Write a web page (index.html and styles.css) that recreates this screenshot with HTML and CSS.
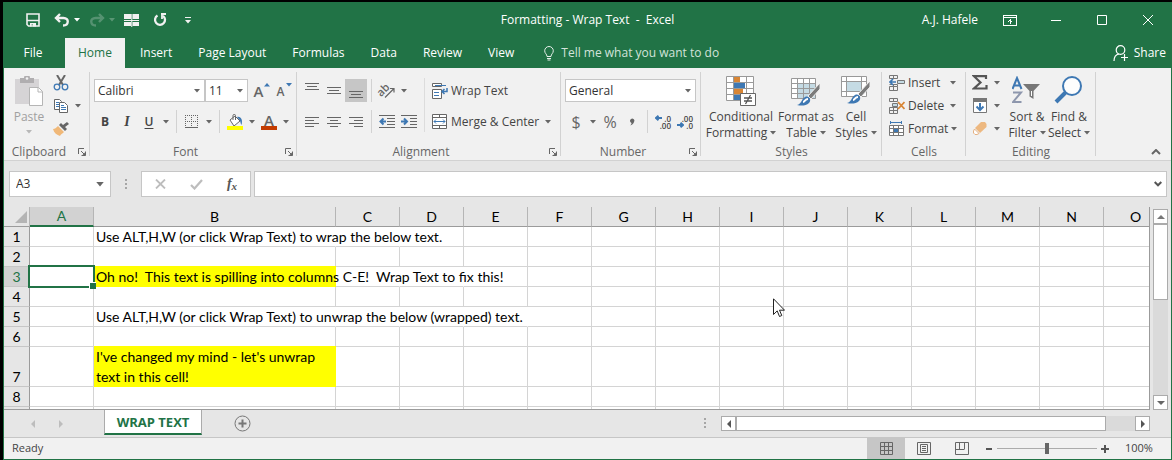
FILE: index.html
```html
<!DOCTYPE html>
<html lang="en">
<head>
<meta charset="utf-8">
<title>Formatting - Wrap Text - Excel</title>
<link rel="stylesheet" href="styles.css">
</head>
<body>
<svg class="defs" width="0" height="0" aria-hidden="true">
  <symbol id="down" viewBox="0 0 6 4"><path d="M0 0h6L3 3.6z" fill="currentColor"/></symbol>
  <symbol id="launch" viewBox="0 0 8 8"><path d="M.5 6V.5H6M3 3l4 4M7.5 3.5v4h-4" fill="none" stroke="currentColor"/><path d="M7.5 4v3.500H4z" fill="currentColor"/></symbol>
  <symbol id="dots" viewBox="0 0 2 11"><path d="M0 0h2v2H0zM0 4h2v2H0zM0 8h2v2H0z" fill="#a6a6a6"/></symbol>
</svg>
<div class="window">
  <header class="titlebar">
    <div class="quick">
      <button class="q" aria-label="Save"><svg width="14" height="14" viewBox="0 0 14 14"><path d="M1 1h12v12H2.500L1 11.500z" fill="none" stroke="#f1f1f1" stroke-width="1.600"/><path d="M1 7.500h12" stroke="#f1f1f1" stroke-width="1.500"/><path d="M4 10h6v3.500H7V11.500H5.500v2H4z" fill="#f1f1f1"/></svg></button>
      <button class="q" aria-label="Undo"><svg width="16" height="14" viewBox="0 0 16 14"><path d="M6 1L2 5l4 4M2 5h7.500c6 0 5.500 7.500-.5 7.500" fill="none" stroke="#f1f1f1" stroke-width="2.400"/></svg></button>
      <button class="qa" aria-label="Undo list"><svg width="6" height="4"><use href="#down"/></svg></button>
      <button class="q dim" aria-label="Redo"><svg width="16" height="14" viewBox="0 0 16 14"><path d="M10 1l4 4-4 4M14 5H6.500c-6 0-5.500 7.500.5 7.500" fill="none" stroke="#f1f1f1" stroke-width="2.400"/></svg></button>
      <button class="qa dim" aria-label="Redo list"><svg width="6" height="4"><use href="#down"/></svg></button>
      <button class="q" aria-label="Freeze panes"><svg width="16" height="13" viewBox="0 0 16 13"><path d="M0 0h7v5H0zM8.500 0H15v5H8.500zM0 8h7v4H0zM8.500 8H15v4H8.500z" fill="#f1f1f1"/><path d="M0 6h15v1H0zM7.250 0h1v13h-1z" fill="#f1f1f1"/></svg></button>
      <button class="q refresh" aria-label="Repeat"><svg width="14" height="14" viewBox="0 0 14 14"><path d="M4.500 2.500A5 5 0 1 0 10 2.800" fill="none" stroke="#f1f1f1" stroke-width="2.300"/><path d="M8 1h5M9 .5V6" stroke="#f1f1f1" stroke-width="1.800"/></svg></button>
      <button class="q" aria-label="Customize toolbar"><svg width="6" height="7" viewBox="0 0 6 7"><path d="M0 0h6v1H0zM0 3h6L3 6.500z" fill="#f1f1f1"/></svg></button>
    </div>
    <h1 class="title">Formatting - Wrap Text&nbsp; -&nbsp; Excel</h1>
    <div class="account">
      <span class="user">A.J. Hafele</span>
      <button class="w" aria-label="Ribbon display options"><svg width="14" height="11" viewBox="0 0 14 11" fill="none" stroke="#fff" shape-rendering="crispEdges"><path d="M.5.5h13v10H.5zM0 2.500h14M7 4v5M5 6.500h1M8 6.500h1M6 5.500h2"/></svg></button>
      <button class="w" aria-label="Minimize"><svg width="10" height="10"><path d="M0 5h10v1H0z" fill="#fff"/></svg></button>
      <button class="w" aria-label="Maximize"><svg width="10" height="10"><path d="M.5.5h9v9h-9z" fill="none" stroke="#fff"/></svg></button>
      <button class="w" aria-label="Close"><svg width="10" height="10"><path d="M0 0l10 10M10 0L0 10" fill="none" stroke="#fff"/></svg></button>
    </div>
  </header>

  <nav class="tabs">
    <button class="tab file">File</button>
    <button class="tab active">Home</button>
    <button class="tab">Insert</button>
    <button class="tab">Page Layout</button>
    <button class="tab">Formulas</button>
    <button class="tab">Data</button>
    <button class="tab">Review</button>
    <button class="tab">View</button>
    <button class="tell"><svg width="10" height="15" viewBox="0 0 10 15" fill="none" stroke="#e6efe9"><path d="M3 10.500C3 8 .7 7.500.7 4.800a4.300 4.300 0 0 1 8.600 0C9.300 7.500 7 8 7 10.500z"/><path d="M3 12.500h4M3.500 14h3"/></svg>Tell me what you want to do</button>
    <button class="share"><svg width="16" height="16" viewBox="0 0 16 16" fill="none" stroke="#fff" stroke-width="1.200"><circle cx="7.500" cy="5" r="4.300"/><path d="M1 16c0-4 2-6.500 5-7M8 12.500h7M11.500 9v7"/></svg>Share</button>
  </nav>

  <div class="ribbon">
    <section class="group g-clip">
      <div class="body">
        <button class="big paste"><svg width="28" height="30" viewBox="0 0 28 30"><path d="M0 3h24v25H0z" fill="#d6d4d6"/><path d="M5 2h4a3 3 0 0 1 6 0h4v5H5z" fill="#b0aeb0"/><circle cx="12" cy="2.500" r="1.300" fill="#f1f1f1"/><path d="M14.500 11.500h9l4 4v14h-13z" fill="#fff" stroke="#b5b5b5"/><path d="M23 11.500V16h4.500" fill="none" stroke="#b5b5b5"/></svg><span>Paste</span><svg class="ar" width="6" height="4"><use href="#down"/></svg></button>
        <div class="stack">
          <div class="row"><button class="b" aria-label="Cut"><svg width="16" height="16" viewBox="0 0 16 16" fill="none"><path d="M4 0l6 10M12 0L6 10" stroke="#666" stroke-width="2"/><circle cx="4" cy="12" r="2.800" stroke="#3e78b3" stroke-width="1.300"/><circle cx="12" cy="12" r="2.800" stroke="#3e78b3" stroke-width="1.300"/></svg></button></div>
          <div class="row"><button class="b" aria-label="Copy"><svg width="16" height="16" viewBox="0 0 16 16"><g fill="#fff" stroke="#666"><path d="M1.500 1.500h5l2 2v8h-7z"/><path d="M6.500 4.500h5l3 3v7h-8z"/></g><path d="M3 4.500h3M3 6.500h3M3 8.500h3M8 7.500h3M8 9.500h5M8 11.500h5" stroke="#3e78b3"/></svg></button><button class="a" aria-label="Copy options"><svg width="6" height="4"><use href="#down"/></svg></button></div>
          <div class="row"><button class="b" aria-label="Format painter"><svg width="16" height="14" viewBox="0 0 16 14"><path d="M5 4l6 6c-2 2-3 2-4 4C4 13 1 11 0 7c2 0 3-1 5-3z" fill="#f0b878"/><path d="M6 3l6 6 2-2-2-2 4-3-2-2-4 3-2-2z" fill="#666"/></svg></button></div>
        </div>
      </div>
      <footer><span>Clipboard</span><button class="launch" aria-label="Clipboard settings"><svg width="8" height="8"><use href="#launch"/></svg></button></footer>
    </section>

    <section class="group g-font">
      <div class="body rows">
        <div class="row">
          <label class="combo face"><select aria-label="Font"><option>Calibri</option></select><svg width="6" height="4"><use href="#down"/></svg></label>
          <label class="combo size"><select aria-label="Font size"><option>11</option></select><svg width="6" height="4"><use href="#down"/></svg></label>
          <button class="b" aria-label="Increase font size"><span class="ga">A</span><svg class="tip" width="6" height="4" viewBox="0 0 6 4"><path d="M0 3.500h6L3 0z" fill="#3e78b3"/></svg></button>
          <button class="b" aria-label="Decrease font size"><span class="ga small">A</span><svg class="tip" width="6" height="4" viewBox="0 0 6 4"><path d="M0 0h6L3 3.500z" fill="#3e78b3"/></svg></button>
        </div>
        <div class="row second">
          <button class="b bold">B</button><button class="b ital">I</button><button class="b under">U</button><button class="a" aria-label="Underline options"><svg width="6" height="4"><use href="#down"/></svg></button>
          <i class="sep"></i>
          <button class="b" aria-label="Borders"><svg width="14" height="14" viewBox="0 0 14 14" stroke="#666" fill="none"><path d="M0 .5h13M0 6.500h13M.5 0v12M6.500 0v12M12.500 0v12" stroke-dasharray="1 1"/><path d="M0 12.500h13"/></svg></button><button class="a" aria-label="Border options"><svg width="6" height="4"><use href="#down"/></svg></button>
          <i class="sep"></i>
          <button class="b" aria-label="Fill color"><svg width="17" height="16" viewBox="0 0 17 16"><path d="M3 6l5-4 5 5-6 5z" fill="#fff" stroke="#666"/><path d="M6 6V1.500C6 0 8.500 0 8.500 1.500V6" fill="none" stroke="#666"/><path d="M10 3c4-1 6 3 4.500 8-1-1-1-4-2-5z" fill="#3e78b3"/><path d="M0 12h16v4H0z" fill="#ff0"/></svg></button><button class="a" aria-label="Fill color options"><svg width="6" height="4"><use href="#down"/></svg></button>
          <button class="b fontcolor" aria-label="Font color"><span>A</span></button><button class="a" aria-label="Font color options"><svg width="6" height="4"><use href="#down"/></svg></button>
        </div>
      </div>
      <footer><span>Font</span><button class="launch" aria-label="Font settings"><svg width="8" height="8"><use href="#launch"/></svg></button></footer>
    </section>

    <section class="group g-align">
      <div class="body">
        <div class="rows">
          <div class="row">
            <button class="b" aria-label="Top align"><svg width="14" height="16" class="ln"><path d="M0 .5h14M2 3.500h10M0 6.500h14"/></svg></button>
            <button class="b" aria-label="Middle align"><svg width="14" height="16" class="ln"><path d="M0 4.500h14M2 7.500h10M0 10.500h14"/></svg></button>
            <button class="b on" aria-label="Bottom align"><svg width="14" height="16" class="ln"><path d="M0 8.500h14M2 11.500h10M0 14.500h14"/></svg></button>
            <i class="sep"></i>
            <button class="b" aria-label="Orientation"><svg width="22" height="22" viewBox="-2 -3 22 22"><text x="-1" y="11" transform="rotate(-45 5 8)" class="abtext">ab</text><path d="M7 14.500L16 5.500M12 5.500h4v4" fill="none" stroke="#666" stroke-width="1.200"/></svg></button><button class="a" aria-label="Orientation options"><svg width="6" height="4"><use href="#down"/></svg></button>
          </div>
          <div class="row second">
            <button class="b" aria-label="Align left"><svg width="14" height="14" class="ln"><path d="M0 2.500h14M0 5.500h9M0 8.500h14M0 11.500h9"/></svg></button>
            <button class="b" aria-label="Center"><svg width="14" height="14" class="ln"><path d="M0 2.500h14M3 5.500h8M0 8.500h14M3 11.500h8"/></svg></button>
            <button class="b" aria-label="Align right"><svg width="14" height="14" class="ln"><path d="M0 2.500h14M5 5.500h9M0 8.500h14M5 11.500h9"/></svg></button>
            <i class="sep"></i>
            <button class="b" aria-label="Decrease indent"><svg width="16" height="14" class="ln"><path d="M0 .5h16M8 3.500h8M8 6.500h8M8 9.500h8M0 12.500h16"/><path class="blue" d="M7 6.500H1M4.500 3.500l-3 3 3 3"/></svg></button>
            <button class="b" aria-label="Increase indent"><svg width="16" height="14" class="ln"><path d="M0 .5h16M9 3.500h7M9 6.500h7M9 9.500h7M0 12.500h16"/><path class="blue" d="M0 6.500h6M3 3.500l3 3-3 3"/></svg></button>
          </div>
        </div>
        <i class="tall"></i>
        <div class="rows labels">
          <div class="row"><button class="lab"><svg width="16" height="16" viewBox="0 0 16 16" fill="none" stroke="#666"><path d="M.5.5h9v3h-9z" fill="#fff"/><path d="M.5 6.500h9v9h-9z" fill="#fff"/><path d="M3 2.500h11M2 9.500h5M2 12.500h5" stroke="#3e78b3"/><path d="M15 5v3.500h-4M12.500 6l-2.500 2.500 2.500 2.500" stroke="#3e78b3" stroke-width="1.500"/></svg>Wrap Text</button></div>
          <div class="row second"><button class="lab"><svg width="16" height="16" viewBox="0 0 16 16" fill="none" stroke="#666"><path d="M.5.5h14v14H.5z" fill="#fff"/><path d="M0 3.500h15M0 11.500h15M7.500 0v3M7.500 12v3"/><path d="M2 7.500h11M4 5.500l-2 2 2 2M11 5.500l2 2-2 2" stroke="#3e78b3"/></svg>Merge &amp; Center</button><button class="a" aria-label="Merge options"><svg width="6" height="4"><use href="#down"/></svg></button></div>
        </div>
      </div>
      <footer><span>Alignment</span><button class="launch" aria-label="Alignment settings"><svg width="8" height="8"><use href="#launch"/></svg></button></footer>
    </section>

    <section class="group g-num">
      <div class="body rows">
        <div class="row"><label class="combo format"><select aria-label="Number format"><option>General</option></select><svg width="6" height="4"><use href="#down"/></svg></label></div>
        <div class="row second">
          <button class="b sym">$</button><button class="a" aria-label="Currency options"><svg width="6" height="4"><use href="#down"/></svg></button><button class="b sym">%</button><button class="b" aria-label="Comma style"><svg width="8" height="8" viewBox="0 0 8 8"><path d="M2 2.500a2.200 2.200 0 1 1 4 1.500C5.500 6 4 7 2 7.500c1-.8 1.500-1.500 1.500-2.500C2.500 4.500 2 3.500 2 2.500z" fill="#666"/></svg></button>
          <i class="sep"></i>
          <button class="b dec" aria-label="Increase decimal"><svg class="arrow" width="7" height="6" viewBox="0 0 7 6"><path d="M7 3H1.500M3.500.8L1 3l2.500 2.200"/></svg><span>.0</span><span class="full">.00</span></button>
          <button class="b dec" aria-label="Decrease decimal"><span class="full">.00</span><svg class="arrow" width="7" height="6" viewBox="0 0 7 6"><path d="M0 3h5.500M3.500.8L6 3 3.500 5.200"/></svg><span>.0</span></button>
        </div>
      </div>
      <footer><span>Number</span><button class="launch" aria-label="Number settings"><svg width="8" height="8"><use href="#launch"/></svg></button></footer>
    </section>

    <section class="group g-styles">
      <div class="body">
        <button class="big cf"><svg width="30" height="30" viewBox="0 0 30 30"><path d="M.5.5h27v24H.5z" fill="#fff"/><path d="M8 1h6v5H8zM8 13h9v5H8z" fill="#d88534"/><path d="M8 7h11v5H8zM8 19h6v5H8z" fill="#3e78b3"/><path d="M.5.5h27v24H.5zM7.500 0v24M20.500 0v24M0 6.500h28M0 12.500h28M0 18.500h28" fill="none" stroke="#999"/><path d="M14.500 17.500h15v12h-15z" fill="#fff" stroke="#666"/><path d="M18 22h8M18 25h8M24.500 19l-5 9" stroke="#555" fill="none" stroke-width="1.300"/></svg><span>Conditional</span><span>Formatting <svg width="6" height="4"><use href="#down"/></svg></span></button>
        <button class="big fat"><svg width="30" height="30" viewBox="0 0 30 30"><path d="M.5 2.500h24v20H.5z" fill="#fff"/><path d="M7 8h18v15H7z" fill="#c5dbe4"/><path d="M.5 2.500h24v20H.5zM6.500 2v20M12.500 2v20M18.500 2v20M0 7.500h25M0 12.500h25M0 17.500h25" fill="none" stroke="#999"/><path d="M29 7v6l-9 10-3-3z" fill="#7b7b7b" stroke="#f1f1f1"/><path d="M6 29c5-1 4-6 8-8s7 3 4 6-8 3-12 2z" fill="#3e78b3"/><path d="M12 26c2 0 2-3 5-3" stroke="#fff" stroke-width="2" fill="none"/></svg><span>Format as</span><span>Table <svg width="6" height="4"><use href="#down"/></svg></span></button>
        <button class="big cs"><svg width="30" height="30" viewBox="0 0 30 30"><path d="M.5.5h25v20H.5z" fill="#fff"/><path d="M6 6h15v9H6z" fill="#c5dbe4"/><path d="M.5.5h25v20H.5zM5.500 0v20M20.500 0v20M0 5.500h26M0 15.500h26" fill="none" stroke="#999"/><path d="M29 5v6l-9 10-3-3z" fill="#7b7b7b" stroke="#f1f1f1"/><path d="M6 27c5-1 4-6 8-8s7 3 4 6-8 3-12 2z" fill="#3e78b3"/><path d="M12 24c2 0 2-3 5-3" stroke="#fff" stroke-width="2" fill="none"/></svg><span>Cell</span><span>Styles <svg width="6" height="4"><use href="#down"/></svg></span></button>
      </div>
      <footer><span>Styles</span></footer>
    </section>

    <section class="group g-cells">
      <div class="body stack">
        <div class="row"><button class="lab"><svg width="16" height="16" viewBox="0 0 16 16" fill="none" stroke="#777"><path d="M.5.500h8v3h-8zM4.500 0v3M.5 11.500h8v4h-8zM4.500 9v6M.5 9.500h8v2"/><path d="M8.500 5.500h7v3h-7z" fill="#c5dbe4"/><path d="M7 7H1M4 4L1 7l3 3" stroke="#3e78b3" stroke-width="1.700"/></svg>Insert</button><button class="a" aria-label="Insert options"><svg width="6" height="4"><use href="#down"/></svg></button></div>
        <div class="row"><button class="lab"><svg width="16" height="16" viewBox="0 0 16 16" fill="none" stroke="#777"><path d="M.5.500h8v3h-8zM4.500 0v3M.5 9.500h8v6h-8zM4.500 9v6M.5 12.500h8"/><path d="M3.500 5.500h5v3h-5z" fill="#c5dbe4"/><path d="M9 4l6.500 7M15.500 4L9 11" stroke="#d88534" stroke-width="1.800"/></svg>Delete</button><button class="a" aria-label="Delete options"><svg width="6" height="4"><use href="#down"/></svg></button></div>
        <div class="row"><button class="lab"><svg width="16" height="16" viewBox="0 0 16 16" fill="none" stroke="#777"><path d="M.5 4.500h14v10H.5z" fill="#fff"/><path d="M4 7h5v4H4z" fill="#3e78b3" stroke="none"/><path d="M4.500 4v11M9.500 4v11M0 7.500h15M0 11.500h15"/><path d="M1 1.500h12M1.500 0v3M12.500 0v3" stroke="#3e78b3"/></svg>Format</button><button class="a" aria-label="Format options"><svg width="6" height="4"><use href="#down"/></svg></button></div>
      </div>
      <footer><span>Cells</span></footer>
    </section>

    <section class="group g-edit">
      <div class="body">
        <div class="stack">
          <div class="row"><button class="b" aria-label="AutoSum"><svg width="16" height="15" viewBox="0 0 16 15"><path d="M14 4V1.200H2L8.500 7.500 2 13.500h12.500V10" fill="none" stroke="#555" stroke-width="2.200"/></svg></button><button class="a" aria-label="AutoSum options"><svg width="6" height="4"><use href="#down"/></svg></button></div>
          <div class="row"><button class="b" aria-label="Fill"><svg width="14" height="16" viewBox="0 0 14 16"><path d="M.5.5h13v14H.5z" fill="#fff" stroke="#777"/><path d="M0 0h14v4H0z" fill="#777"/><path d="M7 5v7M3.500 8.500L7 12l3.500-3.500" fill="none" stroke="#3e78b3" stroke-width="2"/></svg></button><button class="a" aria-label="Fill options"><svg width="6" height="4"><use href="#down"/></svg></button></div>
          <div class="row"><button class="b" aria-label="Clear"><svg width="14" height="14" viewBox="0 0 14 14"><path d="M8 0h4l1.500 2v3L7 11 2 6z" fill="#edb880"/><path d="M1.500 7l4.500 4.500L4 12.500H2L.5 11V9z" fill="#fff" stroke="#e4b183"/></svg></button><button class="a" aria-label="Clear options"><svg width="6" height="4"><use href="#down"/></svg></button></div>
        </div>
        <button class="big sort"><svg width="30" height="30" viewBox="1 0 30 30"><path d="M1.500 13L6 2l4.500 11M3 9.500h6" fill="none" stroke="#3e78b3" stroke-width="2"/><path d="M2 16.500h8L2 26h8.500" fill="none" stroke="#8e97ad" stroke-width="2"/><path d="M12 8h17l-6.500 7v8l-4-2.500V15z" fill="#777"/><path d="M20.500 15v5" stroke="#fff"/></svg><span>Sort &amp;</span><span>Filter <svg width="6" height="4"><use href="#down"/></svg></span></button>
        <button class="big find"><svg width="30" height="30" viewBox="1 0 30 30"><circle cx="19" cy="10" r="9" fill="#fdfdfd" stroke="#3e78b3" stroke-width="2"/><path d="M12.500 16.500L3 26" stroke="#3e78b3" stroke-width="4"/></svg><span>Find &amp;</span><span>Select <svg width="6" height="4"><use href="#down"/></svg></span></button>
      </div>
      <footer><span>Editing</span></footer>
    </section>
    <button class="collapse" aria-label="Collapse ribbon"><svg width="10" height="6" viewBox="0 0 10 6"><path d="M1 5l4-4 4 4" fill="none" stroke="#666" stroke-width="2"/></svg></button>
  </div>

  <div class="formula">
    <label class="namebox"><input type="text" value="A3" aria-label="Name box"><svg width="8" height="5"><use href="#down"/></svg></label>
    <svg class="grip" width="2" height="11"><use href="#dots"/></svg>
    <div class="fx">
      <button aria-label="Cancel"><svg width="11" height="10" viewBox="0 0 11 10"><path d="M1 .5l9 9M10 .5l-9 9" stroke="#bdbdbd" stroke-width="1.800"/></svg></button>
      <button aria-label="Enter"><svg width="13" height="11" viewBox="0 0 13 11"><path d="M1 6l3.500 3.500L12 1" fill="none" stroke="#bdbdbd" stroke-width="2.200"/></svg></button>
      <button class="fn"><em>f</em><em class="x">x</em></button>
    </div>
    <label class="entry"><input type="text" aria-label="Formula bar"><svg width="8" height="6" viewBox="0 0 8 6"><path d="M.7 1L4 4.300 7.300 1" fill="none" stroke="#555" stroke-width="2"/></svg></label>
  </div>

  <main class="work">
    <div class="sheet">
      <table>
        <colgroup><col class="c-row"><col class="c"><col class="c-wide"><col class="c"><col class="c"><col class="c"><col class="c"><col class="c"><col class="c"><col class="c"><col class="c"><col class="c"><col class="c"><col class="c"><col class="c"><col class="c"></colgroup>
        <thead><tr><th class="corner"><svg width="12" height="12"><path d="M12 0v12H0z" fill="#b4b4b4"/></svg></th><th class="sel">A</th><th>B</th><th>C</th><th>D</th><th>E</th><th>F</th><th>G</th><th>H</th><th>I</th><th>J</th><th>K</th><th>L</th><th>M</th><th>N</th><th>O</th></tr></thead>
        <tbody>
          <tr><th>1</th><td></td><td class="open">Use ALT,H,W (or click Wrap Text) to wrap the below text.</td><td class="open"></td><td></td><td></td><td></td><td></td><td></td><td></td><td></td><td></td><td></td><td></td><td></td><td></td></tr>
          <tr><th>2</th><td></td><td></td><td></td><td></td><td></td><td></td><td></td><td></td><td></td><td></td><td></td><td></td><td></td><td></td><td></td></tr>
          <tr><th class="sel">3</th><td class="current"><div class="cursor"></div></td><td class="mark">Oh no!&nbsp; This text is spilling into columns C-E!&nbsp; Wrap Text to fix this!</td><td class="open"></td><td class="open"></td><td></td><td></td><td></td><td></td><td></td><td></td><td></td><td></td><td></td><td></td><td></td></tr>
          <tr><th>4</th><td></td><td></td><td></td><td></td><td></td><td></td><td></td><td></td><td></td><td></td><td></td><td></td><td></td><td></td><td></td></tr>
          <tr><th>5</th><td></td><td class="open">Use ALT,H,W (or click Wrap Text) to unwrap the below (wrapped) text.</td><td class="open"></td><td class="open"></td><td class="open"></td><td></td><td></td><td></td><td></td><td></td><td></td><td></td><td></td><td></td><td></td></tr>
          <tr><th>6</th><td></td><td></td><td></td><td></td><td></td><td></td><td></td><td></td><td></td><td></td><td></td><td></td><td></td><td></td><td></td></tr>
          <tr><th>7</th><td></td><td class="mark wrap">I've changed my mind - let's unwrap text in this cell!</td><td></td><td></td><td></td><td></td><td></td><td></td><td></td><td></td><td></td><td></td><td></td><td></td><td></td></tr>
          <tr><th>8</th><td></td><td></td><td></td><td></td><td></td><td></td><td></td><td></td><td></td><td></td><td></td><td></td><td></td><td></td><td></td></tr>
          <tr><th></th><td></td><td></td><td></td><td></td><td></td><td></td><td></td><td></td><td></td><td></td><td></td><td></td><td></td><td></td><td></td></tr>
        </tbody>
      </table>
    </div>
    <div class="vscroll">
      <button class="sb" aria-label="Scroll up"><svg width="8" height="4"><path d="M0 4h8L4 0z" fill="#777"/></svg></button>
      <div class="vthumb"></div>
      <button class="sb end" aria-label="Scroll down"><svg width="8" height="4"><path d="M0 0h8L4 4z" fill="#666"/></svg></button>
    </div>
  </main>

  <div class="sheetbar">
    <button class="nav" aria-label="Previous sheet"><svg width="4" height="8"><path d="M4 0v8L0 4z" fill="#bdbdbd"/></svg></button>
    <button class="nav" aria-label="Next sheet"><svg width="4" height="8"><path d="M0 0v8l4-4z" fill="#bdbdbd"/></svg></button>
    <button class="sheettab">WRAP TEXT</button>
    <button class="add" aria-label="New sheet"><svg width="17" height="17" viewBox="0 0 17 17" fill="none" stroke="#777"><circle cx="8.500" cy="8.500" r="7.500"/><path d="M8.500 4.500v8M4.500 8.500h8" stroke-width="2"/></svg></button>
    <svg class="grip" width="2" height="11"><use href="#dots"/></svg>
    <div class="hscroll">
      <button class="sb" aria-label="Scroll left"><svg width="4" height="8"><path d="M4 0v8L0 4z" fill="#555"/></svg></button>
      <div class="hthumb"></div>
      <button class="sb end" aria-label="Scroll right"><svg width="4" height="8"><path d="M0 0v8l4-4z" fill="#555"/></svg></button>
    </div>
  </div>

  <footer class="status">
    <span class="ready">Ready</span>
    <button class="view on" aria-label="Normal view"><svg width="13" height="13" fill="none" stroke="#666"><path d="M.5.5h12v12H.5zM4.500 0v13M8.500 0v13M0 4.500h13M0 8.500h13"/></svg></button>
    <button class="view" aria-label="Page layout view"><svg width="14" height="13" fill="none" stroke="#666"><path d="M.5.5h13v12H.5zM3.500 2.500h7v8h-7zM5 4.500h4M5 6.500h4M5 8.500h4"/></svg></button>
    <button class="view" aria-label="Page break view"><svg width="14" height="13" fill="none" stroke="#666"><path d="M.5.5h13v12H.5zM4.500 0v7M9.500 0v7M0 7.500h9.500"/></svg></button>
    <button class="zoom" aria-label="Zoom out"><svg width="6" height="2"><path d="M0 0h6v2H0z" fill="#555"/></svg></button>
    <input class="slider" type="range" min="0" max="100" value="50" aria-label="Zoom">
    <button class="zoom" aria-label="Zoom in"><svg width="8" height="8"><path d="M0 3h8v2H0zM3 0h2v8H3z" fill="#555"/></svg></button>
    <span class="percent">100%</span>
  </footer>

  <svg class="pointer" width="12" height="20" viewBox="0 0 12 20"><path d="M.5.8v15.700l3.700-3.600 2.300 5.600 2.300-1-2.300-5.300h5z" fill="#fff" stroke="#222"/></svg>
</div>
</body>
</html>
```
FILE: styles.css
```css
* { box-sizing: border-box; }
body {
  margin: 0;
  padding: 2px 0 0 3px;
  min-height: 100vh;
  background: #000;
  color: #444;
  font: 12px/16px "Open Sans", "Noto Sans", sans-serif;
}
button, input, select { font: inherit; color: inherit; }
button {
  display: flex;
  align-items: center;
  justify-content: center;
  padding: 0;
  border: 0;
  background: none;
  white-space: nowrap;
}
svg { flex: none; }
.defs { position: absolute; }

.window {
  position: relative;
  display: flex;
  flex-direction: column;
  height: calc(100vh - 2px);
  border: 1px solid #217346;
  border-top: 0;
  background: #e6e6e6;
}

/* title bar */
.titlebar {
  display: grid;
  grid-template-columns: 1fr auto 1fr;
  align-items: center;
  height: 36px;
  background: #217346;
  color: #fff;
}
.quick { display: flex; padding-left: 17px; }
.q { width: 24px; height: 24px; }
.qa { width: 12px; height: 24px; margin: 0 2px 0 -3px; }
.quick .q:nth-child(2) { margin-left: 5px; }
.quick .refresh { margin: 0 4px; }
.dim { opacity: .25; }
.title { margin: 0; font-size: 12px; font-weight: 400; }
.account { display: flex; justify-content: flex-end; align-items: center; }
.user { margin-right: 9px; }
.w { width: 46px; height: 30px; }

/* ribbon tabs */
.tabs { display: flex; height: 30px; background: #217346; color: #fff; }
.tab { padding: 0 13px; }
.file { width: 61px; padding-right: 16px; }
.active { margin-right: 2px; background: #f1f1f1; color: #217346; }
.tell { gap: 7px; margin-left: 17px; color: #d3e3da; }
.share { gap: 5px; margin: 0 5px 0 auto; }

/* ribbon */
.ribbon {
  display: flex;
  height: 93px;
  background: #f1f1f1;
  border-bottom: 1px solid #d2d2d2;
}
.group { position: relative; display: flex; flex-direction: column; padding-top: 3px; flex: none; }
.group::after {
  content: "";
  position: absolute;
  right: 0;
  top: 4px;
  bottom: 4px;
  width: 1px;
  background: #d2d2d2;
}
.g-clip { width: 86px; }
.g-font { width: 207px; }
.g-align { width: 264px; }
.g-num { width: 140px; }
.g-styles { width: 181px; }
.g-cells { width: 84px; }
.g-edit { width: 130px; }
.body { display: flex; height: 72px; }
.rows, .stack { display: flex; flex-direction: column; }
.rows { padding-top: 8px; gap: 8px; }
.row { display: flex; align-items: center; height: 23px; }
.group footer { display: flex; align-items: center; height: 18px; padding-top: 2px; color: #666; }
.group footer span { flex: 1; text-align: center; }
.launch { width: 16px; height: 16px; color: #666; }
.a { width: 12px; height: 23px; color: #666; }
.b { position: relative; width: 22px; height: 23px; }
.on { background: #c6c6c6; }
.sep { width: 1px; height: 23px; margin: 0 4px; background: #d2d2d2; }
.big { flex-direction: column; justify-content: flex-start; padding-top: 5px; }
.big > svg:first-child { margin-bottom: 3px; }
.big span { display: flex; align-items: center; gap: 3px; }
.big span svg { color: #666; }
.lab { gap: 3px; }

.paste { width: 42px; margin-left: 4px; color: #a0a0a0; }
.paste .ar { margin-top: 5px; color: #b8b8b8; }

.g-font .row, .g-align .row, .g-num .row { padding-left: 4px; }
.combo { display: grid; align-items: center; height: 23px; background: #fff; border: 1px solid #c6c6c6; }
.combo select {
  grid-area: 1 / 1;
  width: 100%;
  height: 21px;
  padding: 0 3px;
  border: 0;
  background: none;
  appearance: none;
  color: #333;
}
.combo svg { grid-area: 1 / 1; justify-self: end; margin-right: 4px; pointer-events: none; color: #666; }
.face { width: 111px; }
.size { width: 43px; margin-right: 2px; }
.format { width: 131px; }
.ga { padding-right: 5px; font-size: 15px; font-weight: 600; color: #666; }
.ga.small { padding-top: 2px; font-size: 12px; }
.tip { position: absolute; right: 2px; top: 4px; }
.bold { font-weight: 700; }
.ital { font: italic 700 14px "Liberation Serif", serif; }
.under { font-weight: 600; text-decoration: underline; text-underline-offset: 2px; }
.fontcolor span { width: 16px; height: 16px; border-bottom: 4px solid #c33b00; font-size: 15px; font-weight: 600; line-height: 12px; color: #666; }
.ln { fill: none; stroke: #666; }
.ln .blue { stroke: #3e78b3; stroke-width: 2; }
.abtext { font-size: 11px; font-weight: 600; fill: #666; }
.tall { width: 1px; height: 54px; margin: 7px 7px 0 4px; background: #dcdcdc; }
.labels .row { padding-left: 0; }
.labels .a { margin-left: 3px; }
.sym { font-size: 16px; color: #666; }
.dec {
  display: grid;
  grid-template-columns: 7px 9px;
  grid-auto-rows: 7px;
  align-content: center;
  align-items: center;
  font-size: 8px;
  font-weight: 600;
  line-height: 7px;
  text-align: right;
}
.dec .full { grid-column: 1 / -1; }
.arrow { fill: none; stroke: #3e78b3; stroke-width: 2; }

.cf { width: 76px; margin-left: 2px; }
.fat { width: 54px; }
.cs { width: 46px; }
.g-cells .row { padding-left: 7px; }
.g-cells .a { margin-left: auto; margin-right: 7px; }
.g-edit .stack { padding-left: 3px; }
.sort { width: 42px; margin-left: 3px; }
.find { width: 42px; }
.collapse { width: 20px; height: 16px; margin: auto 5px 0 auto; }

/* formula bar */
.formula { display: flex; align-items: center; height: 46px; padding: 0 4px 0 5px; }
.namebox, .entry, .fx { display: flex; align-items: center; height: 26px; background: #fff; border: 1px solid #c6c6c6; }
.namebox { width: 102px; padding: 0 6px; color: #666; }
.namebox input, .entry input { flex: 1; min-width: 0; padding: 0; border: 0; background: none; outline: 0; color: #333; }
.formula .grip { margin: 0 14px; }
.fx { width: 110px; margin-right: 3px; }
.fx button { flex: 1; }
.fx .fn { font: 700 14px/16px "Liberation Serif", serif; color: #555; }
.fn .x { padding-top: 3px; font-size: 11px; }
.entry { flex: 1; padding: 0 4px; }

/* grid */
.work { display: flex; flex: 1; min-height: 0; }
.sheet { flex: 1; min-width: 0; overflow: hidden; background: #fff; border-right: 1px solid #9b9b9b; border-bottom: 1px solid #9b9b9b; }
table { width: 1164px; table-layout: fixed; border-spacing: 0; font: 14px/19px Lato, "Open Sans", sans-serif; color: #000; }
.c-row { width: 26px; }
.c { width: 64px; }
.c-wide { width: 242px; }
th { padding: 0; font-weight: 400; background: #e6e6e6; }
thead th { height: 20px; border-right: 1px solid #b5b5b5; border-bottom: 1px solid #9b9b9b; }
thead .sel { border-bottom: 2px solid #217346; line-height: 18px; }
th.sel { background: #d2d2d2; color: #217346; }
.corner svg { display: block; margin-left: 11px; }
tbody th { vertical-align: bottom; border-right: 1px solid #9b9b9b; border-bottom: 1px solid #c6c6c6; }
td {
  height: 20px;
  padding: 0 2px;
  vertical-align: bottom;
  white-space: nowrap;
  border-right: 1px solid #d4d4d4;
  border-bottom: 1px solid #d4d4d4;
}
.open { border-right-color: transparent; }
.mark { background: #ff0; border-color: #ff0; box-shadow: 0 -1px #ff0; }
.wrap { white-space: normal; line-height: 20px; }
td.wrap { height: 40px; padding: 0 2px; border-bottom: 0; }
.current { position: relative; }
.cursor { position: absolute; inset: -2px; border: 2px solid #217346; }
.cursor::after {
  content: "";
  position: absolute;
  right: -3px;
  bottom: -3px;
  width: 6px;
  height: 6px;
  background: #217346;
  border: 1px solid #fff;
  border-width: 1px 0 0 1px;
}

.vscroll { display: flex; flex-direction: column; width: 15px; margin: 2px 3px 0 3px; background: #dadada; }
.sb { flex: none; width: 15px; height: 15px; background: #fff; border: 1px solid #ababab; }
.vthumb { height: 76px; background: #fff; border: 1px solid #ababab; }
.vscroll .end { margin-top: auto; }

/* sheet tabs */
.sheetbar { display: flex; align-items: center; height: 28px; padding-right: 21px; border-bottom: 1px solid #c6c6c6; }
.nav { width: 28px; height: 20px; }
.nav:first-child { margin-left: 15px; }
.sheettab {
  align-self: flex-start;
  width: 98px;
  height: 25px;
  margin: 0 32px 0 29px;
  background: #fff;
  border: 1px solid #ababab;
  border-top: 0;
  border-bottom: 2px solid #217346;
  color: #217346;
  font-size: 13px;
  font-weight: 700;
}
.sheetbar .grip { margin: 0 15px 0 auto; }
.hscroll { display: flex; width: 429px; background: #dadada; }
.hthumb { width: 370px; background: #fff; border: 1px solid #ababab; }
.hscroll .end { margin-left: auto; }

/* status bar */
.status { display: flex; align-items: center; height: 21px; padding-left: 8px; background: #f1f1f1; font-size: 11px; }
.ready, .percent { padding-bottom: 2px; }
.ready { margin-right: auto; }
.view { width: 38px; height: 21px; }
.zoom { width: 16px; height: 16px; }
.slider { width: 100px; height: 16px; margin: 0; appearance: none; background: linear-gradient(#ababab, #ababab) center / 100% 1px no-repeat; }
.slider::-webkit-slider-thumb { appearance: none; width: 4px; height: 11px; background: #666; }
.percent { width: 58px; padding-left: 12px; }

.pointer { position: absolute; left: 769px; top: 296px; }
```
